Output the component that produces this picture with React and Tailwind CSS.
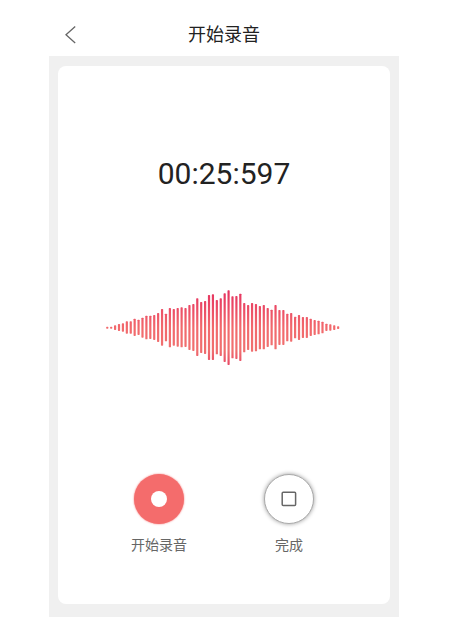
import React, { useState } from 'react';

// [top, bottom] of every bar in the wave form
const bars = [
  [125, 131], [125, 131], [121, 135], [117, 138], [115, 140], [109, 146],
  [109, 146], [101, 153], [104, 150], [98, 158], [92, 163], [92, 162],
  [90, 165], [84, 171], [72, 182], [86, 169], [69, 187], [72, 182],
  [69, 185], [67, 187], [69, 186], [60, 195], [57, 198], [40, 213],
  [51, 204], [48, 207], [30, 225], [28, 225], [45, 208], [40, 213],
  [25, 231], [16, 240], [34, 220], [33, 222], [26, 228], [54, 202],
  [60, 195], [54, 200], [57, 199], [63, 193], [60, 193], [69, 186],
  [74, 181], [60, 193], [75, 180], [75, 180], [86, 169], [84, 170],
  [95, 160], [90, 165], [96, 159], [96, 159], [101, 153], [105, 150],
  [107, 148], [110, 145], [116, 138], [118, 137], [121, 135], [124, 132],
];

function Waveform() {
  return (
    <svg viewBox="0 0 708 255" className="w-[236px] h-[85px]" aria-hidden="true">
      <defs>
        <linearGradient id="wave" gradientUnits="userSpaceOnUse" x1="0" y1="15" x2="0" y2="240">
          <stop offset="0" stopColor="#e5315f" />
          <stop offset="0.5" stopColor="#f2696c" />
          <stop offset="0.8" stopColor="#f0706f" />
          <stop offset="1" stopColor="#e84a66" />
        </linearGradient>
      </defs>
      {bars.map(([top, bottom], i) => (
        <rect key={i} x={0.5 + i * 11.74} y={top} width="6.6" height={bottom - top} rx="2" fill="url(#wave)" />
      ))}
    </svg>
  );
}

function App() {
  const [recording, setRecording] = useState(true);

  return (
    <div className="min-h-screen bg-white pl-[49px] pr-[55px] pb-[18px] flex flex-col font-['Roboto','Noto_Sans_CJK_SC',sans-serif]">
      <header className="h-14 pt-[14px] grid grid-cols-[1fr_auto_1fr] items-center">
        <button type="button" aria-label="返回" className="w-10 h-10 pl-4 text-[#666666]">
          <svg viewBox="0 0 11 18" className="w-[11px] h-[18px]" fill="none" stroke="currentColor" strokeWidth="1.3">
            <path d="M10.2 0.6L1 8.8L10.2 17" />
          </svg>
        </button>
        <h1 className="text-lg text-[#222222]">开始录音</h1>
      </header>

      <main className="flex-1 flex bg-[#f0f0f0] px-[9px] pt-[10px] pb-[13px]">
        <section className="flex-1 flex flex-col items-center bg-white rounded-lg pt-[90px]">
          <time className="text-[30px] leading-9 text-[#222222]">00:25:597</time>
          <div className="mt-[93px]">
            <Waveform />
          </div>

          <div className="mt-[104px] flex gap-[74px]">
            <div className="w-14 flex flex-col items-center">
              <button
                type="button"
                id="record"
                aria-labelledby="record-label"
                aria-pressed={recording}
                onClick={() => setRecording(true)}
                className="w-[50px] h-[50px] rounded-full bg-[#f46c6c] shadow-[0_0_2px_#f46c6c] flex items-center justify-center"
              >
                <span className="w-4 h-4 rounded-full bg-white" />
              </button>
              <label id="record-label" htmlFor="record" className="mt-[11px] text-sm text-[#666666] whitespace-nowrap">
                开始录音
              </label>
            </div>
            <div className="w-14 flex flex-col items-center">
              <button
                type="button"
                id="finish"
                aria-labelledby="finish-label"
                onClick={() => setRecording(false)}
                className="w-[50px] h-[50px] rounded-full bg-white border border-[#aaaaaa] shadow-[0_0_4px_#999999] flex items-center justify-center"
              >
                <svg viewBox="0 0 16 16" className="w-4 h-4" fill="none" stroke="#666666" strokeWidth="1.5">
                  <rect x="1.2" y="1.2" width="13.4" height="13.4" rx="1" />
                </svg>
              </button>
              <label id="finish-label" htmlFor="finish" className="mt-[11px] text-sm text-[#666666] whitespace-nowrap">
                完成
              </label>
            </div>
          </div>
        </section>
      </main>
    </div>
  );
}

export default App;
